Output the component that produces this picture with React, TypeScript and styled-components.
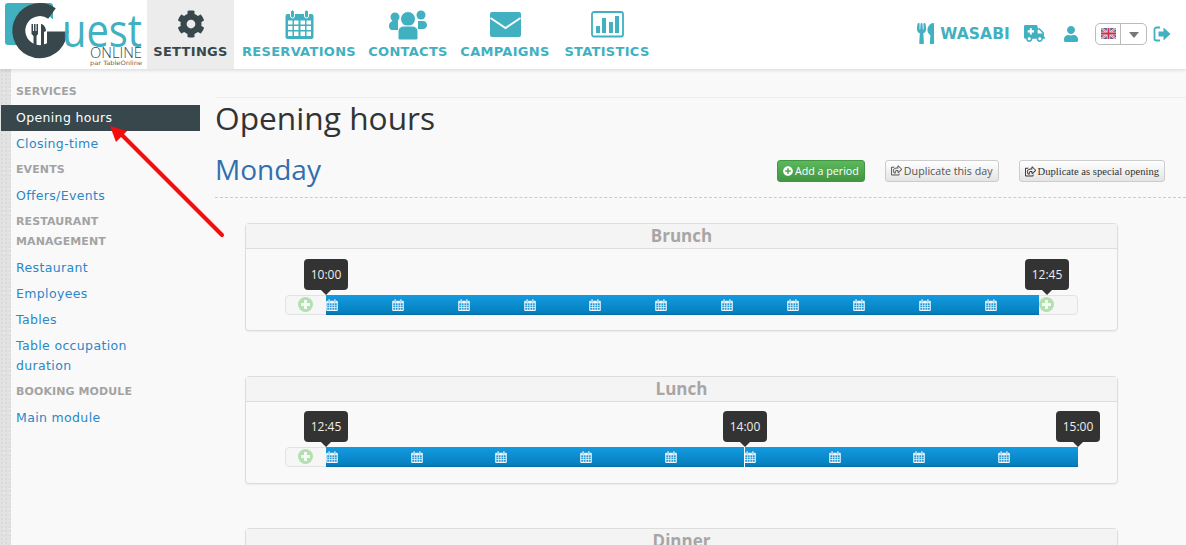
import styled, { createGlobalStyle } from 'styled-components'
import {
  FaAmbulance,
  FaCog,
  FaPlusCircle,
  FaRegShareSquare,
  FaUser,
  FaUtensils,
} from 'react-icons/fa'

const TEAL = '#41b0c0'

const GlobalStyle = createGlobalStyle`
  html, body {
    margin: 0;
    height: 100%;
    overflow: hidden;
    background: #f9f9f9;
  }
  * {
    box-sizing: border-box;
  }
`

const Logo = () => (
  <LogoBox>
    <svg width="147" height="69" viewBox="0 0 147 69" overflow="visible">
      <rect x="5" y="3" width="48" height="42" rx="3" fill={TEAL} />
      <circle cx="38" cy="34" r="21" fill="#fff" />
      <path
        d="M52 13.5 A21 21 0 1 0 59.5 38 L47 38"
        fill="none"
        stroke="#37474c"
        strokeWidth="13"
      />
      <path d="M31.5 24h1.5v7h1V24h1.5v7h1V24h1.5v10l-1.5 2v9h-3v-9l-2-2z" fill="#37474c" />
      <path d="M41 24c3 0 5 4 5 7l-2 1v13h-3z" fill="#37474c" />
      <LogoWord x="62" y="47" textLength="80" lengthAdjust="spacingAndGlyphs">uest</LogoWord>
      <LogoOnline x="90" y="58" textLength="52" lengthAdjust="spacingAndGlyphs">ONLINE</LogoOnline>
      <LogoPar x="90" y="65" textLength="52" lengthAdjust="spacingAndGlyphs">par TableOnline</LogoPar>
    </svg>
  </LogoBox>
)

const CalendarIcon = ({ size, fill, hole }: { size: number; fill: string; hole: string }) => (
  <svg width={size} height={size} viewBox="0 0 28 29">
    <rect x="0" y="4" width="28" height="25" rx="2" fill={fill} />
    <rect x="5" y="0" width="4" height="8" rx="2" fill={fill} stroke={hole} strokeWidth="1" />
    <rect x="19" y="0" width="4" height="8" rx="2" fill={fill} stroke={hole} strokeWidth="1" />
    <path
      d="M2.5 10.5h4.5v4h-4.5zM8.5 10.5h4.5v4h-4.5zM15 10.5h4.5v4h-4.5zM21 10.5h4.5v4h-4.5zM2.5 16h4.5v4h-4.5zM8.5 16h4.5v4h-4.5zM15 16h4.5v4h-4.5zM21 16h4.5v4h-4.5zM2.5 21.5h4.5v4.5h-4.5zM8.5 21.5h4.5v4.5h-4.5zM15 21.5h4.5v4.5h-4.5zM21 21.5h4.5v4.5h-4.5z"
      fill={hole}
    />
  </svg>
)

const ContactsIcon = () => (
  <svg width="38" height="32" viewBox="0 0 38 32">
    <circle cx="6" cy="9" r="4.5" fill={TEAL} />
    <circle cx="32" cy="7" r="4.5" fill={TEAL} />
    <path d="M0 18c0-3 2-5 5-5h4v9H3c-2 0-3-2-3-4zM29 13h5c2.5 0 4 2 4 4s-1.5 4-4 4h-5z" fill={TEAL} />
    <circle cx="19" cy="11" r="7.5" fill={TEAL} stroke="#fff" strokeWidth="1" />
    <path d="M9 24c0-4 3-6 6-6h8c3 0 6 2 6 6v6c0 1-1 2-2 2H11c-1 0-2-1-2-2z" fill={TEAL} stroke="#fff" strokeWidth="1" />
  </svg>
)

const EnvelopeIcon = () => (
  <svg width="31" height="25" viewBox="0 0 31 25">
    <rect width="31" height="25" rx="2" fill={TEAL} />
    <path d="M0.5 6l15 10 15-10" fill="none" stroke="#fff" strokeWidth="2" />
  </svg>
)

const StatsIcon = () => (
  <svg width="33" height="27" viewBox="0 0 33 27">
    <rect x="1" y="1" width="31" height="24.5" rx="2" fill="none" stroke={TEAL} strokeWidth="1.8" />
    <path d="M5 15h4v7H5zM11 7h4v15h-4zM18 11h4v11h-4zM24 5h4v17h-4z" fill={TEAL} />
  </svg>
)

const SignOutIcon = () => (
  <svg width="18" height="16" viewBox="0 0 18 16">
    <path d="M7 1.5H3.5a2 2 0 0 0-2 2v9a2 2 0 0 0 2 2H7" fill="none" stroke={TEAL} strokeWidth="1.8" />
    <path d="M5.5 5.5h5V1.5l7 6.5-7 6.5v-4h-5z" fill={TEAL} />
  </svg>
)

const Flag = () => (
  <svg width="15" height="11" viewBox="0 0 15 11">
    <rect width="15" height="11" fill="#5a5f92" />
    <path d="M0 0l15 11M15 0L0 11" stroke="#e8e4ea" strokeWidth="2.2" />
    <path d="M0 0l15 11M15 0L0 11" stroke="#cf4460" strokeWidth="0.7" />
    <path d="M7.5 0v11M0 5.5h15" stroke="#e8e4ea" strokeWidth="3.4" />
    <path d="M7.5 0v11M0 5.5h15" stroke="#cf2b45" strokeWidth="1.8" />
  </svg>
)

const navItems = [
  { label: 'SETTINGS', icon: <FaCog size={28} />, active: true, w: 87 },
  { label: 'RESERVATIONS', icon: <CalendarIcon size={29} fill={TEAL} hole="#fff" />, active: false, w: 114 },
  { label: 'CONTACTS', icon: <ContactsIcon />, active: false, w: 78 },
  { label: 'CAMPAIGNS', icon: <EnvelopeIcon />, active: false, w: 90 },
  { label: 'STATISTICS', icon: <StatsIcon />, active: false, w: 88 },
]

const sideMenu = [
  { title: 'SERVICES', links: ['Opening hours', 'Closing-time'] },
  { title: 'EVENTS', links: ['Offers/Events'] },
  {
    title: 'RESTAURANT MANAGEMENT',
    links: ['Restaurant', 'Employees', 'Tables', 'Table occupation duration'],
  },
  { title: 'BOOKING MODULE', links: ['Main module'] },
]

type Marker = { at: number; label: string }

type Period = {
  name: string
  start: number
  end: number
  bodyTop: number
  markers: Marker[]
  icons: number[]
  splits?: number[]
  endHandle?: boolean
}

// pixel positions are measured from the left edge of the track
const periods: Period[] = [
  {
    name: 'Brunch',
    start: 40,
    end: 753,
    bodyTop: 46,
    markers: [
      { at: 40, label: '10:00' },
      { at: 761, label: '12:45' },
    ],
    icons: [46, 112, 178, 244, 309, 375, 441, 507, 573, 639, 705],
    endHandle: true,
  },
  {
    name: 'Lunch',
    start: 40,
    end: 792,
    bodyTop: 45,
    markers: [
      { at: 40, label: '12:45' },
      { at: 459, label: '14:00' },
      { at: 792, label: '15:00' },
    ],
    icons: [46, 131, 215, 300, 385, 464, 549, 633, 718],
    splits: [458],
  },
  { name: 'Dinner', start: 40, end: 792, bodyTop: 46, markers: [], icons: [] },
]

const App = () => {
  return (
    <Page>
      <GlobalStyle />
      <TopBar>
        <Logo />
        <Nav>
          {navItems.map((item) => (
            <NavItem key={item.label} $active={item.active} $w={item.w}>
              <NavIcon>{item.icon}</NavIcon>
              <NavLabel>{item.label}</NavLabel>
            </NavItem>
          ))}
        </Nav>
        <TopRight>
          <RestoName>
            <FaUtensils size={21} />
            WASABI
          </RestoName>
          <FaAmbulance size={21} />
          <UserSlot>
            <FaUser size={16} />
          </UserSlot>
          <LangSelect>
            <LangFlag>
              <Flag />
            </LangFlag>
            <LangCaret />
          </LangSelect>
          <SignOutSlot>
            <SignOutIcon />
          </SignOutSlot>
        </TopRight>
      </TopBar>

      <Body>
        <Strip />
        <Sidebar>
          {sideMenu.map((group) => (
            <div key={group.title}>
              <SideTitle>{group.title}</SideTitle>
              {group.links.map((link) => (
                <SideLink key={link} $active={link === 'Opening hours'}>
                  {link}
                </SideLink>
              ))}
            </div>
          ))}
        </Sidebar>

        <Main>
          <PageTitle>Opening hours</PageTitle>
          <DayRow>
            <DayName>Monday</DayName>
            <DayActions>
              <GreenButton>
                <FaPlusCircle size={10} />
                Add a period
              </GreenButton>
              <GreyButton>
                <FaRegShareSquare size={11} />
                Duplicate this day
              </GreyButton>
              <SerifButton>
                <FaRegShareSquare size={11} />
                Duplicate as special opening
              </SerifButton>
            </DayActions>
          </DayRow>

          <Cards>
            {periods.map((period) => (
              <Card key={period.name}>
                <CardHead>{period.name}</CardHead>
                <CardBody $top={period.bodyTop}>
                  <Track>
                    <StartHandle>
                      <PlusDot />
                    </StartHandle>
                    <Range $w={period.end - period.start}>
                      {period.icons.map((x) => (
                        <RangeIcon key={x} style={{ left: x - period.start - 6 }}>
                          <CalendarIcon size={12} fill="#eef6fb" hole="#2f9ad4" />
                        </RangeIcon>
                      ))}
                      {period.splits?.map((x) => (
                        <Split key={x} style={{ left: x - period.start }} />
                      ))}
                    </Range>
                    {period.endHandle && <EndHandle><PlusDot /></EndHandle>}
                    {period.markers.map((m) => (
                      <Bubble key={m.at} style={{ left: m.at }}>
                        {m.label}
                      </Bubble>
                    ))}
                  </Track>
                </CardBody>
              </Card>
            ))}
          </Cards>
        </Main>
      </Body>

      <ArrowLayer width="240" height="170" viewBox="0 0 240 170">
        <line x1="222" y1="160" x2="122" y2="60" stroke="#f50d0d" strokeWidth="4" strokeLinecap="round" />
        <path d="M110 51l17 5-11 11z" fill="#f50d0d" />
      </ArrowLayer>
    </Page>
  )
}

export default App

const Page = styled.div`
  position: relative;
  height: 100vh;
  overflow: hidden;
  background: #f9f9f9;
  font-family: 'DejaVu Sans', Verdana, sans-serif;
`

const TopBar = styled.header`
  position: relative;
  z-index: 2;
  display: flex;
  height: 69px;
  background: #fff;
  box-shadow: 0 1px 4px rgba(0, 0, 0, 0.14);
`

const LogoBox = styled.div`
  width: 147px;
  flex: none;
  line-height: 0;
`

const LogoWord = styled.text`
  font-family: 'Open Sans', sans-serif;
  font-size: 46px;
  font-weight: 400;
  fill: ${TEAL};
`

const LogoOnline = styled.text`
  font-family: 'Open Sans', sans-serif;
  font-size: 15px;
  font-weight: 300;
  fill: #37474c;
`

const LogoPar = styled.text`
  font-family: 'DejaVu Sans', sans-serif;
  font-size: 6px;
  fill: #666;
`

const Nav = styled.nav`
  display: flex;
`

const NavItem = styled.div<{ $active: boolean; $w: number }>`
  width: ${(p) => p.$w}px;
  margin-right: ${(p) => (p.$active ? 8 : 13)}px;
  height: 69px;
  display: flex;
  flex-direction: column;
  align-items: center;
  background: ${(p) => (p.$active ? '#ececec' : 'transparent')};
  color: ${(p) => (p.$active ? '#37474c' : TEAL)};
`

const NavIcon = styled.div`
  height: 44px;
  display: flex;
  align-items: center;
  justify-content: center;
  padding-top: 4px;
`

const NavLabel = styled.div`
  font-size: 13px;
  line-height: 16px;
  font-weight: 700;
  letter-spacing: 0.3px;
  white-space: nowrap;
`

const TopRight = styled.div`
  margin-left: auto;
  display: flex;
  align-items: center;
  height: 67px;
  padding-right: 15px;
  color: ${TEAL};
`

const RestoName = styled.div`
  display: flex;
  align-items: center;
  gap: 4px;
  margin-right: 14px;
  font-size: 15.5px;
  font-weight: 700;
  letter-spacing: 0.1px;
`

const UserSlot = styled.div`
  display: flex;
  margin: 0 16px 0 18px;
`

const LangSelect = styled.div`
  display: flex;
  width: 52px;
  height: 22px;
  border: 1px solid #bbb;
  border-radius: 5px;
  background: #fff;
`

const LangFlag = styled.div`
  width: 25px;
  display: flex;
  align-items: center;
  justify-content: center;
  line-height: 0;
  border-right: 1px solid #bbb;
`

const LangCaret = styled.div`
  width: 0;
  height: 0;
  margin: 8px 0 0 8px;
  border-left: 5px solid transparent;
  border-right: 5px solid transparent;
  border-top: 6px solid #777;
`

const SignOutSlot = styled.div`
  display: flex;
  margin-left: 6px;
`

const Body = styled.div`
  display: flex;
  height: 476px;
`

const Strip = styled.div`
  width: 11px;
  flex: none;
  background-color: #e2e2e2;
  background-image: radial-gradient(#d2d2d2 0.6px, transparent 0.8px),
    radial-gradient(#efefef 0.6px, transparent 0.8px);
  background-size: 4px 4px, 5px 5px;
  background-position: 0 0, 2px 2px;
`

const Sidebar = styled.aside`
  width: 189px;
  flex: none;
  padding-top: 10px;
  margin-right: 15px;
`

const SideTitle = styled.div`
  width: 140px;
  padding: 3px 5px;
  font-size: 11px;
  line-height: 20px;
  font-weight: 700;
  letter-spacing: 0.1px;
  color: #a3a3a3;
`

const SideLink = styled.div<{ $active: boolean }>`
  margin-left: ${(p) => (p.$active ? '-10px' : '0')};
  padding: 3px 5px 3px ${(p) => (p.$active ? '15px' : '5px')};
  font-size: 12.5px;
  line-height: 20px;
  letter-spacing: 0.35px;
  color: ${(p) => (p.$active ? '#fff' : '#2a87c8')};
  background: ${(p) => (p.$active ? '#37474c' : 'transparent')};
  width: ${(p) => (p.$active ? '199px' : '150px')};
`

const Main = styled.main`
  flex: 1;
  min-width: 0;
  margin-top: 28px;
  border-top: 1px solid #eee;
  font-family: 'Open Sans', sans-serif;
`

const PageTitle = styled.h1`
  margin: 0;
  padding-top: 0;
  font-size: 31.7px;
  line-height: 40px;
  font-weight: 500;
  color: #333;
`

const DayRow = styled.div`
  display: flex;
  align-items: center;
  justify-content: space-between;
  height: 60px;
  padding: 2px 21px 0 0;
  border-bottom: 1px dashed #ccc;
`

const DayName = styled.h2`
  margin: 0;
  font-size: 28px;
  line-height: 36px;
  font-weight: 400;
  color: #3170ae;
`

const DayActions = styled.div`
  display: flex;
  gap: 20px;
  margin-top: 4px;
`

const GreenButton = styled.div`
  display: flex;
  align-items: center;
  gap: 2px;
  height: 22px;
  padding: 0 5px;
  font-size: 10.7px;
  color: #fff;
  border: 1px solid #419641;
  border-radius: 3px;
  background: linear-gradient(#5cb85c, #419641);
  white-space: nowrap;
`

const GreyButton = styled.div`
  display: flex;
  align-items: center;
  gap: 2px;
  height: 22px;
  padding: 0 5px;
  font-size: 10.7px;
  color: #555;
  border: 1px solid #ccc;
  border-radius: 3px;
  background: linear-gradient(#fff, #e4e4e4);
  white-space: nowrap;
`

const SerifButton = styled(GreyButton)`
  font-family: 'Liberation Serif', serif;
  font-size: 10.6px;
  font-weight: 400;
  color: #333;
  padding-top: 1px;
`

const Cards = styled.div`
  display: flex;
  flex-direction: column;
  gap: 44.5px;
  padding: 25px 68px 0 30px;
`

const Card = styled.section`
  height: 108px;
  flex: none;
  border: 1px solid #ddd;
  border-radius: 4px;
  background: #f9f9f9;
  box-shadow: 0 1px 2px rgba(0, 0, 0, 0.06);
`

const CardHead = styled.div`
  height: 25px;
  font-size: 17px;
  line-height: 24px;
  font-weight: 700;
  text-align: center;
  color: #aaa5a5;
  background: #f4f4f4;
  border-bottom: 1px solid #ddd;
`

const CardBody = styled.div<{ $top: number }>`
  padding: ${(p) => p.$top}px 39px 0 39px;
`

const Track = styled.div`
  position: relative;
  display: flex;
  width: 793px;
  height: 20px;
  border: 1px solid #e3e3e3;
  border-radius: 4px;
  background: #f6f6f6;
`

const StartHandle = styled.div`
  width: 40px;
  flex: none;
  position: relative;
`

const EndHandle = styled.div`
  position: relative;
  width: 14px;
  flex: none;
`

const PlusDot = styled.div`
  position: absolute;
  left: 12px;
  top: 1px;
  width: 15px;
  height: 15px;
  border-radius: 50%;
  background: #b3e0b0;

  &::before,
  &::after {
    content: '';
    position: absolute;
    background: #f2faf1;
  }
  &::before {
    left: 3px;
    top: 6px;
    width: 9px;
    height: 3px;
  }
  &::after {
    left: 6px;
    top: 3px;
    width: 3px;
    height: 9px;
  }

  ${EndHandle} & {
    left: 0;
  }
`

const Range = styled.div<{ $w: number }>`
  position: relative;
  width: ${(p) => p.$w}px;
  flex: none;
  height: 20px;
  margin-top: -1px;
  background: linear-gradient(#149bdf 0%, #0480be 90%, #036a9e 100%);
`

const RangeIcon = styled.span`
  position: absolute;
  top: 4px;
  line-height: 0;
`

const Split = styled.span`
  position: absolute;
  top: 0;
  width: 1px;
  height: 20px;
  background: #fff;
`

const Bubble = styled.div`
  position: absolute;
  top: -37px;
  transform: translateX(-50%);
  width: 44px;
  height: 31px;
  border-radius: 4px;
  background: #333;
  color: #eee;
  font-size: 12px;
  font-weight: 400;
  line-height: 31px;
  text-align: center;
  z-index: 1;

  &::after {
    content: '';
    position: absolute;
    left: 17px;
    bottom: -5px;
    border-left: 5px solid transparent;
    border-right: 5px solid transparent;
    border-top: 5px solid #333;
  }
`

const ArrowLayer = styled.svg`
  position: absolute;
  left: 0;
  top: 75px;
  z-index: 3;
  pointer-events: none;
`
